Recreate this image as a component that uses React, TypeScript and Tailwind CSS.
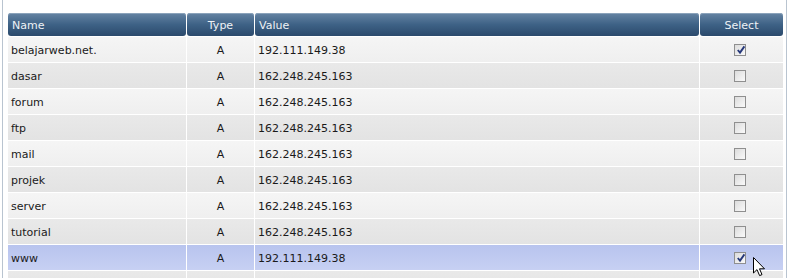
import React from "react";

const rows = [
  { name: "belajarweb.net.", type: "A", value: "192.111.149.38", checked: true },
  { name: "dasar", type: "A", value: "162.248.245.163", checked: false },
  { name: "forum", type: "A", value: "162.248.245.163", checked: false },
  { name: "ftp", type: "A", value: "162.248.245.163", checked: false },
  { name: "mail", type: "A", value: "162.248.245.163", checked: false },
  { name: "projek", type: "A", value: "162.248.245.163", checked: false },
  { name: "server", type: "A", value: "162.248.245.163", checked: false },
  { name: "tutorial", type: "A", value: "162.248.245.163", checked: false },
  { name: "www", type: "A", value: "192.111.149.38", checked: true, selected: true },
  { name: "", type: "", value: "", checked: false },
];

function Checkbox({ checked }: { checked: boolean }) {
  return (
    <div className="relative w-[12px] h-[12px] border border-[#8f8f8f] bg-gradient-to-br from-[#dcdcdc] to-[#fafafa]">
      {checked && (
        <svg className="absolute left-[1px] top-[0px]" width="10" height="10" viewBox="0 0 10 10">
          <path d="M1.8 5 L4 7.6 L8.4 1.4" fill="none" stroke="#26387a" strokeWidth="1.9" />
        </svg>
      )}
    </div>
  );
}

export default function App() {
  const grid = "grid grid-cols-[178px_67px_444px_83px] gap-x-px";
  return (
    <div
      className="relative w-[793px] h-[278px] overflow-hidden bg-white"
      style={{ fontFamily: '"DejaVu Sans", Verdana, sans-serif' }}
    >
      <div className="absolute left-[2px] top-0 bottom-0 w-px bg-[#b9c4d0]" />
      <div className="absolute left-[786px] top-0 bottom-0 w-px bg-[#b9c4d0]" />
      <div className="pl-[8px] pt-[13px]">
        <div className={`${grid} h-[23px] text-[11px] text-[#eef2f6]`}>
          {["Name", "Type", "Value", "Select"].map((h, i) => (
            <div
              key={h}
              className={`flex items-center pt-[4px] rounded-[3px] bg-gradient-to-b from-[#6684a3] via-[#3e6286] to-[#2b4a6c] shadow-[inset_0_1px_0_#8ba3bb] ${
                i === 1 || i === 3 ? "justify-center" : "pl-[4px]"
              }`}
            >
              {h}
            </div>
          ))}
        </div>
        <div className="flex flex-col gap-y-px mt-px bg-white">
          {rows.map((r, idx) => {
            const bg = r.selected
              ? "bg-gradient-to-b from-[#b8c4ee] to-[#c7d0f3]"
              : idx % 2 === 0
              ? "bg-gradient-to-b from-[#f5f5f5] to-[#efefef]"
              : "bg-gradient-to-b from-[#e9e9e9] to-[#e3e3e3]";
            return (
              <div key={idx} className={`${grid} h-[25px] text-[11px] text-[#1a1a1a]`}>
                <div className={`${bg} flex items-center pt-[3px] pl-[3px]`}>{r.name}</div>
                <div className={`${bg} flex items-center pt-[3px] justify-center`}>{r.type}</div>
                <div className={`${bg} flex items-center pt-[3px] pl-[3px]`}>{r.value}</div>
                <div className={`${bg} flex items-center justify-center pr-[4px]`}>
                  <Checkbox checked={r.checked} />
                </div>
              </div>
            );
          })}
        </div>
      </div>
      <svg className="absolute left-[753px] top-[257px]" width="14" height="21" viewBox="0 0 14 21">
        <path
          d="M0.5 0.5 L0.5 16 L4 12.6 L6.6 18.6 L9 17.6 L6.5 11.8 L11.5 11.8 Z"
          fill="white"
          stroke="black"
          strokeWidth="1"
          strokeLinejoin="round"
        />
      </svg>
    </div>
  );
}
